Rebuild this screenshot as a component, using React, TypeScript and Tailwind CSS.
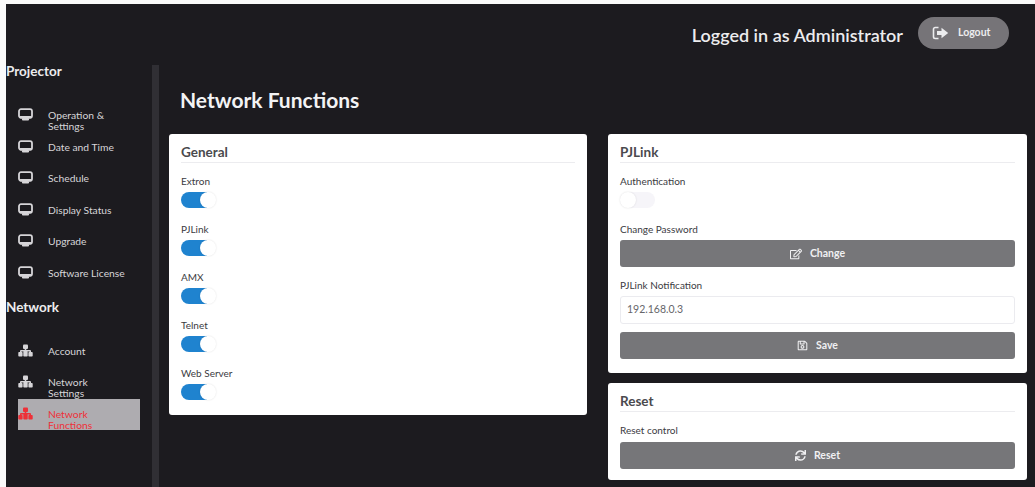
import type { ReactNode } from "react";
import { FaRegEdit, FaRegSave, FaSync } from "react-icons/fa";

const projectorItems = [
  { label: "Operation & Settings", width: "w-[62px]" },
  { label: "Date and Time", width: "w-[90px]" },
  { label: "Schedule", width: "w-[90px]" },
  { label: "Display Status", width: "w-[90px]" },
  { label: "Upgrade", width: "w-[90px]" },
  { label: "Software License", width: "w-[90px]" },
];

const networkItems = [
  { label: "Account", active: false },
  { label: "Network Settings", active: false },
  { label: "Network Functions", active: true },
];

const protocols = ["Extron", "PJLink", "AMX", "Telnet", "Web Server"];

function MonitorIcon() {
  return (
    <svg viewBox="0 0 15 13" className="h-[13px] w-[15px]" fill="none">
      <rect x="1" y="1.2" width="13" height="8.6" rx="2" stroke="currentColor" strokeWidth="1.8" />
      <path d="M2.500 9.200h10M5 11.400h5" stroke="currentColor" strokeWidth="2.2" strokeLinecap="round" />
    </svg>
  );
}

function SitemapIcon() {
  return (
    <svg viewBox="0 0 15 13" className="h-[13px] w-[15px]" fill="currentColor">
      <rect x="5" y="0.5" width="5" height="4.5" rx="1" />
      <path d="M6.700 4h1.600v2H12a1 1 0 0 1 1 1v2h-1.500V7.400H3.500V9H2V7a1 1 0 0 1 1-1h3.700z" />
      <rect x="0.3" y="8" width="4.300" height="4.500" rx="0.800" />
      <rect x="5.300" y="7" width="4.400" height="5.500" rx="0.800" />
      <rect x="10.400" y="8" width="4.300" height="4.500" rx="0.800" />
    </svg>
  );
}

function LogoutIcon() {
  return (
    <svg viewBox="0 0 17 14" className="h-[14px] w-[17px]" fill="none">
      <path
        d="M6.5 1.5H3.2A1.7 1.7 0 0 0 1.5 3.2v7.6a1.7 1.7 0 0 0 1.7 1.7h3.3"
        stroke="currentColor"
        strokeWidth="1.6"
      />
      <path d="M5 5h4.500V1.800L16.200 7l-6.700 5.200V9H5z" fill="currentColor" />
    </svg>
  );
}

function NavItem({
  icon,
  label,
  width,
  active,
}: {
  icon: ReactNode;
  label: string;
  width: string;
  active?: boolean;
}) {
  return (
    <li
      className={`ml-[12px] flex h-[31.6px] w-[122px] pt-[8px] ${
        active ? "bg-[#aeacb0] text-[#ee3038]" : "text-[#d6d5d8]"
      }`}
    >
      <span className="flex h-[13px] w-[30px] shrink-0 items-center">{icon}</span>
      <span className={`shrink-0 pt-[2px] text-[10.3px] leading-[11px] ${width}`}>{label}</span>
    </li>
  );
}

function Toggle({ on }: { on: boolean }) {
  return (
    <div
      className={`flex h-4 w-[35px] rounded-full ${
        on ? "justify-end bg-linear-to-r from-[#1f83cf] from-75% to-white to-75%" : "bg-[#f6f5f9]"
      }`}
    >
      <div className="size-4 rounded-full bg-white shadow-[0_0_2px_rgba(0,0,0,0.12)]" />
    </div>
  );
}

function Card({ title, className, children }: { title: string; className: string; children: ReactNode }) {
  return (
    <section className={`rounded-[3px] bg-white px-[12px] ${className}`}>
      <h2 className="h-[29px] border-b border-[#ececef] pt-[8px] text-[13.5px] leading-[20px] font-bold text-[#4a4a4e]">
        {title}
      </h2>
      {children}
    </section>
  );
}

function ActionButton({ icon, label }: { icon: ReactNode; label: string }) {
  return (
    <button className="flex h-[27px] w-full items-center justify-center gap-[8px] rounded-[3px] bg-[#767679] text-[10.5px] font-bold text-[#f0f0f2]">
      {icon}
      {label}
    </button>
  );
}

function Label({ children }: { children: ReactNode }) {
  return <div className="h-[12px] text-[10px] leading-[12px] text-[#3b3b3f]">{children}</div>;
}

export default function App() {
  return (
    <div className="h-[487px] w-[1035px] overflow-hidden bg-[#fafafa] pt-[4px] pl-[6px] font-['Lato',sans-serif]">
      <div className="flex h-[483px] flex-col bg-[#1c1b1f]">
        <header className="flex h-[61px] shrink-0 items-center justify-end pr-[26px] pb-[6px]">
          <span className="mt-[8px] mr-[15px] text-[18px] font-semibold text-[#ececee]">Logged in as Administrator</span>
          <button className="mt-[2px] flex h-[32px] w-[91px] items-center rounded-full bg-[#767478] pl-[14px] text-[10.5px] font-bold text-[#ececee]">
            <LogoutIcon />
            <span className="ml-[9px]">Logout</span>
          </button>
        </header>

        <div className="flex min-h-0 flex-1">
          <nav className="w-[146px] shrink-0">
            <h3 className="h-[35px] text-[13.5px] leading-[13px] font-bold text-[#ececee]">Projector</h3>
            <ul>
              {projectorItems.map((item) => (
                <NavItem key={item.label} icon={<MonitorIcon />} label={item.label} width={item.width} />
              ))}
            </ul>
            <h3 className="h-[46px] pt-[10px] text-[13.5px] leading-[14px] font-bold text-[#ececee]">Network</h3>
            <ul>
              {networkItems.map((item) => (
                <NavItem
                  key={item.label}
                  icon={<SitemapIcon />}
                  label={item.label}
                  width="w-[50px]"
                  active={item.active}
                />
              ))}
            </ul>
          </nav>
          <div className="w-[7px] shrink-0 bg-[#302f34]" />

          <main className="flex-1 pr-[8px] pl-[10px]">
            <h1 className="h-[69px] pt-[22px] pl-[11px] text-[21px] leading-[26px] font-bold text-[#f3f3f4]">
              Network Functions
            </h1>
            <div className="flex items-start gap-[21px]">
              <Card title="General" className="h-[281px] w-[418px]">
                <div className="flex flex-col gap-[16px] pt-[12px]">
                  {protocols.map((name) => (
                    <div key={name} className="h-[32px]">
                      <Label>{name}</Label>
                      <div className="pt-[5px]">
                        <Toggle on />
                      </div>
                    </div>
                  ))}
                </div>
              </Card>

              <div className="flex flex-1 flex-col gap-[10px]">
                <Card title="PJLink" className="h-[239px]">
                  <div className="pt-[12px]">
                    <Label>Authentication</Label>
                    <div className="pt-[5px] pb-[15px]">
                      <Toggle on={false} />
                    </div>
                    <Label>Change Password</Label>
                    <div className="pt-[5px] pb-[12px]">
                      <ActionButton icon={<FaRegEdit className="size-[12px]" />} label="Change" />
                    </div>
                    <Label>PJLink Notification</Label>
                    <div className="mt-[5px] mb-[8px] flex h-[28px] items-center rounded-[3px] border border-[#ebebef] px-[6px] text-[10.5px] text-[#66666a]">
                      192.168.0.3
                    </div>
                    <ActionButton icon={<FaRegSave className="size-[11px]" />} label="Save" />
                  </div>
                </Card>

                <Card title="Reset" className="h-[97px]">
                  <div className="pt-[12px]">
                    <Label>Reset control</Label>
                    <div className="pt-[6px]">
                      <ActionButton icon={<FaSync className="size-[11px]" />} label="Reset" />
                    </div>
                  </div>
                </Card>
              </div>
            </div>
          </main>
        </div>
      </div>
    </div>
  );
}
